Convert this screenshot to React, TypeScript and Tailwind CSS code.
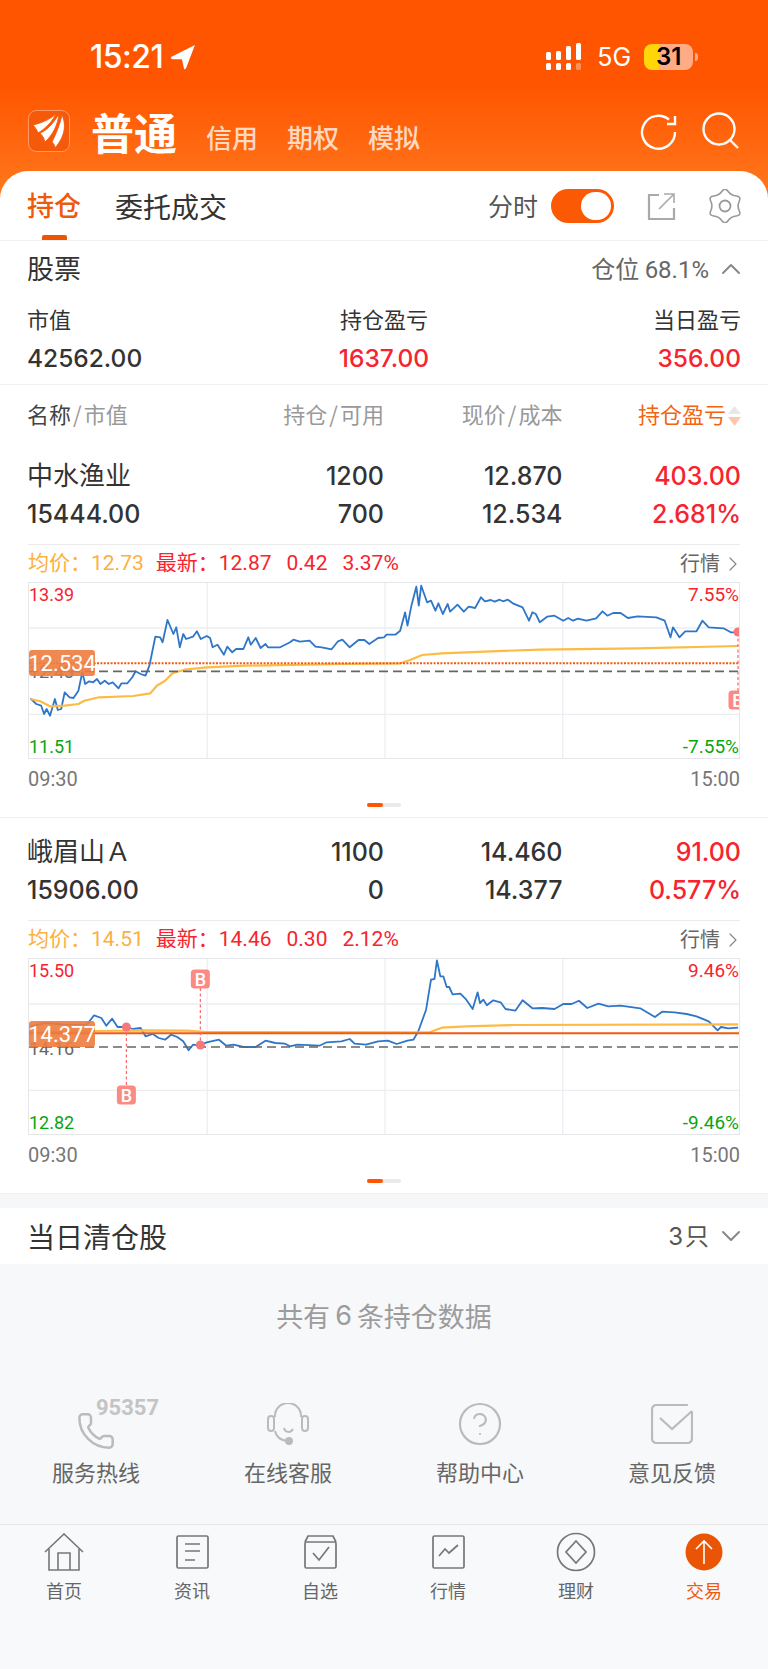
import React from "react";
import { ChevronUp, ChevronDown, ChevronRight, Phone, CircleHelp } from "lucide-react";

const CJK = '"Noto Sans CJK SC", sans-serif';
type P = [number, number];
const mapPts = (arr: P[], yo: number) =>
  arr.map(([x, y]) => `${(x / 2.0417 - 28).toFixed(1)},${((y - yo) / 3).toFixed(1)}`).join(" ");
const X = (x: number) => x / 2.0417 - 28;

const blue1: P[] = [[60,503],[72,520],[82,525],[88,550],[93,535],[100,555],[110,505],[116,538],[123,535],[130,485],[140,500],[148,502],[158,480],[166,425],[172,460],[180,452],[188,455],[196,445],[203,460],[212,450],[220,460],[228,455],[240,473],[246,458],[258,458],[268,440],[275,422],[285,430],[295,435],[303,405],[315,318],[325,320],[330,335],[340,268],[352,310],[358,290],[365,350],[372,310],[378,325],[392,318],[400,302],[408,325],[420,316],[427,322],[432,350],[442,342],[455,372],[462,348],[472,365],[480,355],[495,355],[505,320],[510,342],[520,322],[530,352],[540,340],[545,350],[570,350],[590,335],[597,327],[610,333],[630,330],[642,348],[655,350],[675,356],[688,332],[697,327],[712,350],[730,328],[742,328],[752,340],[770,322],[782,320],[787,312],[805,312],[815,300],[825,245],[830,285],[838,225],[848,168],[853,225],[858,165],[870,215],[878,210],[887,240],[893,218],[902,250],[912,220],[917,243],[932,222],[945,243],[955,228],[968,232],[980,200],[988,212],[1000,208],[1008,213],[1018,207],[1025,212],[1035,207],[1045,218],[1065,230],[1078,270],[1085,245],[1092,250],[1100,275],[1115,258],[1130,255],[1148,270],[1158,262],[1168,270],[1178,264],[1195,270],[1215,263],[1228,242],[1238,255],[1250,247],[1265,247],[1280,262],[1300,257],[1338,260],[1355,270],[1367,320],[1372,290],[1385,320],[1397,302],[1420,302],[1432,270],[1445,290],[1475,293],[1490,305],[1503,305]];
const yellow1: P[] = [[60,505],[80,512],[100,527],[130,525],[158,520],[170,510],[200,500],[270,496],[305,488],[318,465],[335,450],[350,428],[375,417],[420,410],[500,405],[700,400],[815,398],[835,388],[860,373],[900,368],[1000,362],[1100,357],[1300,353],[1505,346]];
const blue2: P[] = [[60,350],[90,340],[130,345],[175,345],[190,317],[205,325],[215,348],[227,327],[238,352],[255,352],[270,358],[285,355],[295,380],[310,373],[322,385],[335,390],[347,375],[360,382],[372,395],[383,422],[392,405],[405,407],[420,398],[445,390],[460,408],[475,405],[495,412],[520,412],[540,393],[560,400],[580,402],[590,410],[605,405],[650,408],[665,398],[695,395],[712,388],[722,402],[745,405],[770,395],[790,393],[808,403],[830,393],[842,390],[852,365],[868,300],[878,210],[885,208],[890,152],[897,200],[903,200],[910,232],[915,232],[922,254],[938,252],[950,270],[963,298],[973,248],[978,280],[985,270],[992,287],[1005,272],[1020,278],[1030,298],[1050,303],[1065,272],[1085,296],[1105,295],[1130,298],[1148,283],[1165,283],[1180,273],[1197,295],[1220,282],[1240,290],[1265,288],[1305,296],[1335,322],[1350,306],[1375,308],[1400,313],[1420,320],[1445,335],[1463,362],[1470,352],[1485,356],[1505,354]];
const yellow2: P[] = [[60,368],[190,364],[300,362],[380,363],[420,367],[850,368],[875,368],[900,354],[950,350],[1050,346],[1505,344]];

// six-lobed gear outline
const gearPath = (() => {
  const pts: P[] = [];
  for (let i = 0; i < 12; i++) {
    const a = (-90 + i * 30) * (Math.PI / 180);
    const r = i % 2 === 0 ? 19 : 12;
    pts.push([16 + r * Math.cos(a), 16 + r * Math.sin(a)]);
  }
  const mid = (a: P, b: P): P => [(a[0] + b[0]) / 2, (a[1] + b[1]) / 2];
  let d = "";
  pts.forEach((p, i) => {
    const next = pts[(i + 1) % 12];
    const prev = pts[(i + 11) % 12];
    const m0 = mid(prev, p);
    const m1 = mid(p, next);
    if (i === 0) d += `M${m0[0].toFixed(2)} ${m0[1].toFixed(2)}`;
    d += ` Q${p[0].toFixed(2)} ${p[1].toFixed(2)} ${m1[0].toFixed(2)} ${m1[1].toFixed(2)}`;
  });
  return d + "Z";
})();

function BBadge({ cx, cy }: { cx: number; cy: number }) {
  return (
    <g>
      <rect x={cx - 9.5} y={cy - 9.5} width={19} height={19} rx={3.5} fill="#fb8a85" />
      <text x={cx} y={cy + 6.5} textAnchor="middle" fontSize={18} fontWeight={500} fill="#fff" fontFamily="Roboto, sans-serif">B</text>
    </g>
  );
}

function ChartLines({ blue, yellow, yo, h1, h2, cost, costDotted, zero, children }: { blue: P[]; yellow: P[]; yo: number; h1: number; h2: number; cost: number; costDotted: boolean; zero: number; children?: React.ReactNode }) {
  const y = (v: number) => (v - yo) / 3;
  return (
    <svg width={711} height={176} viewBox="0 0 711 176" className="absolute left-0 top-0">
      {[421, 784, 1147].map((x) => <line key={x} x1={X(x)} x2={X(x)} y1={0} y2={176} stroke="#eceef2" strokeWidth={1.3} />)}
      {[h1, h2].map((v) => <line key={v} x1={0} x2={711} y1={y(v)} y2={y(v)} stroke="#eceef2" strokeWidth={1.3} />)}
      <polyline points={mapPts(blue, yo)} fill="none" stroke="#2f76c8" strokeWidth={1.8} strokeLinejoin="round" />
      <polyline points={mapPts(yellow, yo)} fill="none" stroke="#fdbb45" strokeWidth={2.2} strokeLinejoin="round" />
      <line x1={0} x2={711} y1={y(zero)} y2={y(zero)} stroke="#666" strokeWidth={1.6} strokeDasharray="9 5" />
      <line x1={0} x2={711} y1={y(cost)} y2={y(cost)} stroke="#f0590f" strokeWidth={2} strokeDasharray={costDotted ? "2 1.4" : undefined} />
      {children}
    </svg>
  );
}

function Chart({ avg, last, diff, pct, hi, lo, up, down, mid, cost, costTop, midTop, children }: { avg: string; last: string; diff: string; pct: string; hi: string; lo: string; up: string; down: string; mid: string; cost: string; costTop: number; midTop: number; children: React.ReactNode }) {
  return (
    <div className="mx-[28px]" style={{ fontFamily: `Roboto, ${CJK}` }}>
      <div className="flex h-[38px] items-center border-t border-[#ebebeb] text-[21px]">
        <span className="text-[#fdb03f]">均价：</span>
        <span className="text-[#fdb03f]">{avg}</span>
        <span className="ml-[12px] text-[#f7232e]">最新：{last}</span>
        <span className="ml-[15px] text-[#f7232e]">{diff}</span>
        <span className="ml-[15px] text-[#f7232e]">{pct}</span>
        <span className="ml-auto text-[20px] text-[#666]">行情</span>
        <ChevronRight size={24} strokeWidth={1.2} className="-mr-[5px] ml-[1px] text-[#888]" />
      </div>
      <div className="relative h-[177px] overflow-hidden border border-[#e4e6ea] text-[18px]">
        {children}
        <span className="absolute left-0 top-0 leading-[24px] text-[#f7232e]">{hi}</span>
        <span className="absolute right-0 top-0 text-[19px] leading-[24px] text-[#f7232e]">{up}</span>
        <span className="absolute -bottom-[1px] left-0 leading-[24px] text-[#0aa512]">{lo}</span>
        <span className="absolute -bottom-[1px] right-0 text-[19px] leading-[24px] text-[#0aa512]">{down}</span>
        <span className="absolute left-0 leading-[24px] text-[#666]" style={{ top: midTop }}>{mid}</span>
        <span className="absolute left-0 flex h-[26px] w-[66px] items-center justify-center rounded-[3px] bg-[#ee7c3e]/90 text-[22px] text-white" style={{ top: costTop }}>{cost}</span>
      </div>
      <div className="flex h-[39px] items-center justify-between text-[20px] text-[#777]">
        <span>09:30</span>
        <span>15:00</span>
      </div>
      <div className="mt-[5px] flex justify-center">
        <div className="h-[4px] w-[34px] rounded-full bg-[#eaeaea]">
          <div className="h-[4px] w-[16px] rounded-full bg-[#ff5500]" />
        </div>
      </div>
    </div>
  );
}

function Stock({ name, mv, qty, avail, price, costP, pnl, pnlPct, children }: { name: string; mv: string; qty: string; avail: string; price: string; costP: string; pnl: string; pnlPct: string; children: React.ReactNode }) {
  return (
    <div className="h-[376px] border-b border-[#f0f0f0]">
      <div className="mx-[27px] grid grid-cols-4 pb-[11px] pt-[15px] text-[25px] font-medium leading-[38px] text-[#333]" style={{ fontFamily: `Inter, ${CJK}` }}>
        <span className="text-[26px] font-normal">{name}</span>
        <span className="text-right">{qty}</span>
        <span className="text-right">{price}</span>
        <span className="text-right text-[#f7232e]">{pnl}</span>
        <span>{mv}</span>
        <span className="text-right">{avail}</span>
        <span className="text-right">{costP}</span>
        <span className="text-right text-[#f7232e]">{pnlPct}</span>
      </div>
      {children}
    </div>
  );
}

function Logo() {
  return (
    <svg width={42} height={42} viewBox="0 0 42 42">
      <rect x={0.5} y={0.5} width={41} height={41} rx={8} fill="#f55a0a" stroke="#ff9a66" />
      <g fill="#fff" stroke="#f55a0a" strokeWidth={0.9}>
        <path d="M5 15 C13 13 21 10 28 4 C24 12 17 19 10 23 C9 20 7 17 5 15Z" />
        <path d="M12 23 C20 20 26 12 31 4 C30 14 25 25 17 32 C16 28 14 25 12 23Z" />
        <path d="M24 32 C28 24 32 14 34 5 C38 14 38 25 27 38 C27 36 26 34 24 32Z" />
      </g>
    </svg>
  );
}

function Service({ label, children }: { label: string; children: React.ReactNode }) {
  return (
    <div className="flex flex-col items-center">
      <div className="relative flex h-[46px] w-[60px] items-center justify-center">{children}</div>
      <span className="mt-[8px] text-[22px] leading-[32px] text-[#666]">{label}</span>
    </div>
  );
}

function Nav({ label, active, children }: { label: string; active?: boolean; children: React.ReactNode }) {
  return (
    <div className="flex flex-col items-center">
      <div className="flex h-[40px] items-center justify-center">{children}</div>
      <span className={`mt-[5px] text-[18px] leading-[26px] ${active ? "text-[#f0590f]" : "text-[#666]"}`}>{label}</span>
    </div>
  );
}

export default function App() {
  return (
    <div className="flex h-[1669px] w-[768px] flex-col overflow-hidden bg-[#f7f8fa]" style={{ fontFamily: CJK }}>
      {/* orange header */}
      <div className="h-[240px] bg-[linear-gradient(180deg,#ff5500_35%,#ff7a1f_85%)]">
        <div className="flex h-[100px] items-center pt-[14px] text-white">
          <span className="ml-[90px] text-[32px] font-medium leading-none tracking-[-0.5px]" style={{ fontFamily: "Inter, sans-serif" }}>15:21</span>
          <svg width={26} height={26} viewBox="0 0 24 24" className="ml-[7px]">
            <path d="M23 1 L1 12 Q0 13 2 14 L11 14 L13 23 Q14 24 15 22 Z" fill="#fff" />
          </svg>
          <svg width={40} height={28} viewBox="0 0 40 28" className="ml-[349px]">
            <g fill="#fff">
              <rect x={1} y={9} width={5} height={8} rx={1.5} />
              <rect x={11} y={8} width={5} height={9} rx={1.5} />
              <rect x={21} y={3} width={5} height={14} rx={1.5} />
              <rect x={31} y={0} width={5} height={17} rx={1.5} />
              <rect x={1} y={20} width={5} height={7} rx={1.5} />
              <rect x={11} y={20} width={5} height={7} rx={1.5} />
              <rect x={21} y={20} width={5} height={7} rx={1.5} />
              <rect x={31} y={20} width={5} height={7} rx={1.5} opacity={0.35} />
            </g>
          </svg>
          <span className="ml-[12px] text-[25px] leading-none" style={{ fontFamily: "Inter, sans-serif" }}>5G</span>
          <div className="ml-[13px] flex h-[26px] w-[49px] items-center justify-center rounded-[8px] bg-[linear-gradient(90deg,#ffd60a_31%,#ffab85_31%)] text-[24px] font-semibold leading-none text-black" style={{ fontFamily: "Inter, sans-serif" }}>31</div>
          <div className="ml-[2px] h-[8px] w-[3px] rounded-r-full bg-[#ffab85]" />
        </div>
        <div className="flex h-[71px] items-start">
          <div className="ml-[28px] mt-[10px]"><Logo /></div>
          <span className="ml-[21px] mt-[3px] text-[43px] font-bold leading-[56px] text-white">普通</span>
          <span className="ml-[29px] mt-[19px] text-[26px] font-medium leading-[36px] text-[#ffd9c2]">信用</span>
          <span className="ml-[29px] mt-[19px] text-[26px] font-medium leading-[36px] text-[#ffd9c2]">期权</span>
          <span className="ml-[29px] mt-[19px] text-[26px] font-medium leading-[36px] text-[#ffd9c2]">模拟</span>
          <svg width={38} height={38} viewBox="0 0 38 38" fill="none" stroke="#fff" strokeWidth={2.4} className="ml-auto mt-[13px]">
            <path d="M29 6.5 A16.5 16.5 0 1 0 35 19" />
            <path d="M35 3 V11 H27" />
          </svg>
          <svg width={38} height={38} viewBox="0 0 38 38" fill="none" stroke="#fff" strokeWidth={2.4} className="ml-[23px] mr-[29px] mt-[12px]">
            <circle cx={18} cy={17} r={15.5} />
            <path d="M29 28 L37 36" />
          </svg>
        </div>
        <div className="flex h-[69px] items-center rounded-t-[28px] bg-white">
          <div className="relative ml-[27px] flex h-[69px] items-center">
            <span className="text-[27px] font-medium text-[#ee5a0c]">持仓</span>
            <div className="absolute bottom-0 left-[15px] h-[5px] w-[25px] rounded-t-[2px] bg-[#ee5408]" />
          </div>
          <span className="ml-[34px] text-[28px] text-[#333]">委托成交</span>
          <span className="ml-auto text-[25px] text-[#555]">分时</span>
          <div className="ml-[13px] flex h-[34px] w-[63px] items-center justify-end rounded-full bg-[#fc5905] pr-[3px]">
            <div className="h-[28px] w-[30px] rounded-full bg-white" />
          </div>
          <svg width={30} height={30} viewBox="0 0 30 30" fill="none" stroke="#a9a9a9" strokeWidth={2.2} className="ml-[32px]">
            <path d="M13 4 H3 V28 H28 V17" />
            <path d="M13 18 L27 4 M18 3 H28 V12" strokeWidth={1.6} />
          </svg>
          <svg width={34} height={34} viewBox="-1 -1 34 34" fill="none" stroke="#999" strokeWidth={1.6} className="ml-[32px] mr-[26px]">
            <path d={gearPath} />
            <circle cx={16} cy={16} r={5.5} strokeWidth={1.8} />
          </svg>
        </div>
      </div>

      {/* content */}
      <div className="bg-white">
        <div className="border-t border-[#f0f0f0]">
          <div className="flex h-[55px] items-center px-[27px]">
            <span className="text-[27px] text-[#333]">股票</span>
            <span className="ml-auto text-[24px] text-[#666]">仓位 <span style={{ fontFamily: "Roboto, sans-serif" }}>68.1%</span></span>
            <ChevronUp size={32} strokeWidth={1.5} className="-mr-[6px] ml-[6px] text-[#888]" />
          </div>
          <div className="grid h-[89px] grid-cols-3 border-b border-[#efefef] px-[27px] py-[6px]" style={{ fontFamily: `Inter, ${CJK}` }}>
            <span className="text-[22px] leading-[36px] text-[#333]">市值</span>
            <span className="text-center text-[22px] leading-[36px] text-[#333]">持仓盈亏</span>
            <span className="text-right text-[22px] leading-[36px] text-[#333]">当日盈亏</span>
            <span className="text-[24.5px] font-medium leading-[40px] text-[#333]">42562.00</span>
            <span className="text-center text-[24.5px] font-medium leading-[40px] text-[#f7232e]">1637.00</span>
            <span className="text-right text-[24.5px] font-medium leading-[40px] text-[#f7232e]">356.00</span>
          </div>
          <div className="mx-[27px] grid h-[57px] grid-cols-4 items-center text-[22px] text-[#999]">
            <span><span className="text-[#444]">名称</span><span className="px-[2px]">/</span>市值</span>
            <span className="text-right">持仓<span className="px-[2px]">/</span>可用</span>
            <span className="text-right">现价<span className="px-[2px]">/</span>成本</span>
            <span className="relative pr-[15px] text-right text-[#f2640f]">
              持仓盈亏
              <svg width={13} height={26} viewBox="0 0 13 26" className="absolute right-0 top-[6px]">
                <path d="M6.5 3 L13 11 H0Z" fill="#e8e8e8" />
                <path d="M6.5 23 L13 14 H0Z" fill="#fdc9ae" />
              </svg>
            </span>
          </div>
        </div>

        <Stock name="中水渔业" mv="15444.00" qty="1200" avail="700" price="12.870" costP="12.534" pnl="403.00" pnlPct="2.681%">
          <Chart avg="12.73" last="12.87" diff="0.42" pct="3.37%" hi="13.39" lo="11.51" up="7.55%" down="-7.55%" mid="12.43" cost="12.534" costTop={67} midTop={77}>
            <ChartLines blue={blue1} yellow={yellow1} yo={157} h1={292} h2={551} cost={398} costDotted zero={422}>
              <line x1={709} x2={709} y1={50} y2={108} stroke="#f7676a" strokeWidth={1.2} strokeDasharray="3 2.5" />
              <circle cx={709} cy={49} r={4.5} fill="#f7787a" />
              <BBadge cx={709} cy={117} />
            </ChartLines>
          </Chart>
        </Stock>
        <Stock name="峨眉山Ａ" mv="15906.00" qty="1100" avail="0" price="14.460" costP="14.377" pnl="91.00" pnlPct="0.577%">
          <Chart avg="14.51" last="14.46" diff="0.30" pct="2.12%" hi="15.50" lo="12.82" up="9.46%" down="-9.46%" mid="14.16" cost="14.377" costTop={62} midTop={78}>
            <ChartLines blue={blue2} yellow={yellow2} yo={148} h1={283} h2={542} cost={371} costDotted={false} zero={412}>
              <line x1={X(407)} x2={X(407)} y1={29} y2={86} stroke="#f7676a" strokeWidth={1.2} strokeDasharray="3 2.5" />
              <line x1={X(256)} x2={X(256)} y1={68} y2={128} stroke="#f7676a" strokeWidth={1.2} strokeDasharray="3 2.5" />
              <circle cx={X(256)} cy={68} r={4.5} fill="#f7787a" />
              <circle cx={X(407)} cy={86} r={4.5} fill="#f7787a" />
              <BBadge cx={X(407)} cy={20} />
              <BBadge cx={X(256)} cy={136} />
            </ChartLines>
          </Chart>
        </Stock>
      </div>

      <div className="h-[14px] shrink-0 bg-[#f6f7f9]" />
      <div className="flex h-[56px] shrink-0 items-center bg-white px-[27px]">
        <span className="text-[28px] text-[#333]">当日清仓股</span>
        <span className="ml-auto text-[24px] text-[#555]"><span className="pr-[2px]" style={{ fontFamily: "Inter, sans-serif" }}>3</span>只</span>
        <ChevronDown size={32} strokeWidth={1.5} className="-mr-[6px] ml-[6px] text-[#888]" />
      </div>

      <div className="flex h-[260px] shrink-0 flex-col">
        <div className="flex h-[104px] items-center justify-center text-[27px] text-[#9c9c9c]">共有<span className="px-[5px]" style={{ fontFamily: "Inter, sans-serif" }}>6</span>条持仓数据</div>
        <div className="grid grid-cols-4 pt-[33px]">
          <Service label="服务热线">
            <Phone size={40} strokeWidth={1.5} className="text-[#bbb]" style={{ marginTop: 14 }} />
            <span className="absolute -top-[4px] left-[30px] text-[22px] font-bold leading-none text-[#c4c4c4]" style={{ fontFamily: "Roboto, sans-serif" }}>95357</span>
          </Service>
          <Service label="在线客服">
            <svg width={42} height={42} viewBox="0 0 42 42" fill="none" stroke="#bbb" strokeWidth={2}>
              <path d="M8 14 V13 A13 13 0 0 1 34 13 V14 M8 28 C9 33 13 37 20 38" />
              <rect x={1} y={13} width={6} height={15} rx={3} />
              <rect x={35} y={13} width={6} height={15} rx={3} />
              <path d="M17 25 C18 30 24 30 26 26" />
              <circle cx={22} cy={38} r={3} fill="#bbb" />
            </svg>
          </Service>
          <Service label="帮助中心">
            <CircleHelp size={48} strokeWidth={1.1} className="text-[#bbb]" />
          </Service>
          <Service label="意见反馈">
            <svg width={42} height={40} viewBox="0 0 42 40" fill="none" stroke="#bbb" strokeWidth={2.2}>
              <path d="M36 1 H6 Q1 1 1 6 V34 Q1 39 6 39 H36 Q41 39 41 34 V8" strokeLinecap="round" />
              <path d="M9 14 L21 25 L41 7" />
            </svg>
          </Service>
        </div>
      </div>

      <div className="flex-1 border-t border-[#e8e8e8] bg-[#f8f9fb]">
        <div className="grid grid-cols-6 pt-[7px]">
          <Nav label="首页">
            <svg width={40} height={38} viewBox="0 0 40 38" fill="none" stroke="#777" strokeWidth={1.6}>
              <path d="M1 19 L20 1 L39 19 M5 16 V37 H35 V16 M14 37 V20 H26 V37" />
            </svg>
          </Nav>
          <Nav label="资讯">
            <svg width={33} height={34} viewBox="0 0 33 34" fill="none" stroke="#777" strokeWidth={1.7}>
              <rect x={1} y={1} width={31} height={32} rx={1.5} />
              <path d="M9 9 H24 M9 16 H24 M9 25 H19" />
            </svg>
          </Nav>
          <Nav label="自选">
            <svg width={33} height={34} viewBox="0 0 33 34" fill="none" stroke="#777" strokeWidth={1.7}>
              <path d="M1 7 L4 1 H29 L32 7" />
              <rect x={1} y={7} width={31} height={26} rx={1.5} />
              <path d="M9 18 L15 25 L25 12" />
            </svg>
          </Nav>
          <Nav label="行情">
            <svg width={33} height={34} viewBox="0 0 33 34" fill="none" stroke="#777" strokeWidth={1.7}>
              <rect x={1} y={1} width={31} height={32} rx={1.5} />
              <path d="M7 21 L13 14 L17 18 L26 10" />
            </svg>
          </Nav>
          <Nav label="理财">
            <svg width={40} height={40} viewBox="0 0 40 40" fill="none" stroke="#777" strokeWidth={1.7}>
              <circle cx={20} cy={20} r={18.5} />
              <path d="M20 9 L30 20 L20 31 L10 20Z" />
            </svg>
          </Nav>
          <Nav label="交易" active>
            <svg width={38} height={38} viewBox="0 0 38 38" fill="none">
              <circle cx={19} cy={19} r={18.5} fill="#e95504" />
              <path d="M19 31 V8 M11 16 L19 8 L27 16" stroke="#fff" strokeWidth={1.6} />
            </svg>
          </Nav>
        </div>
      </div>
    </div>
  );
}
